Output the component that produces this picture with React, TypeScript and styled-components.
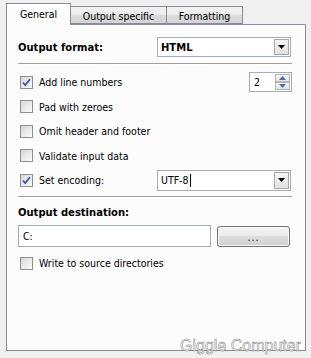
import React from "react";
import styled, { createGlobalStyle } from "styled-components";

const Global = createGlobalStyle`
  html, body { margin: 0; padding: 0; background: #f0f0f0; }
  body { font-family: "DejaVu Sans Condensed", "DejaVu Sans", sans-serif; font-size: 10px; color: #000; }
  * { box-sizing: border-box; }
`;

const Root = styled.div`
  position: relative;
  width: 311px;
  height: 358px;
  padding: 3px 0 0 6px;
  font-family: "DejaVu Sans Condensed", "DejaVu Sans", sans-serif;
  font-size: 10.5px;
`;

const TabStrip = styled.div`
  display: flex;
  align-items: flex-end;
  height: 21px;
  position: relative;
  z-index: 1;
`;

const Tab = styled.div<{ $active?: boolean; $w: number }>`
  height: ${(p) => (p.$active ? "22px" : "18px")};
  margin-bottom: ${(p) => (p.$active ? "-1px" : "0")};
  width: ${(p) => p.$w}px;
  border: 1px solid #898c95;
  border-bottom: ${(p) => (p.$active ? "none" : "1px solid #898c95")};
  margin-left: ${(p) => (p.$active ? "0" : "-1px")};
  background: ${(p) =>
    p.$active ? "#fcfcfc" : "linear-gradient(#f2f2f2, #ebebeb 50%, #dcdcdc 51%, #d4d4d4)"};
  display: flex;
  align-items: ${(p) => (p.$active ? "flex-start" : "center")};
  justify-content: center;
  padding-top: ${(p) => (p.$active ? "4px" : "1px")};
  color: #000;
`;

const Panel = styled.div`
  width: 300px;
  height: 327px;
  border: 1px solid #898c95;
  background: #fcfcfc;
  padding: 12px 13px 0 11px;
  display: flex;
  flex-direction: column;
`;

const FieldRow = styled.div<{ $h?: number }>`
  display: flex;
  align-items: center;
  height: ${(p) => p.$h ?? 20}px;
`;

const BoldLabel = styled.div<{ $w?: number }>`
  font-family: "DejaVu Sans", sans-serif;
  font-size: 10px;
  font-weight: bold;
  width: ${(p) => p.$w ?? 139}px;
  flex: none;
`;

const Separator = styled.div<{ $mt: number }>`
  margin-top: ${(p) => p.$mt}px;
  height: 2px;
  border-top: 1px solid #a0a0a0;
  border-bottom: 1px solid #ffffff;
`;

const Combo = styled.div<{ $w: number; $h: number }>`
  width: ${(p) => p.$w}px;
  height: ${(p) => p.$h}px;
  border: 1px solid #a5acb5;
  background: #fff;
  display: flex;
  align-items: center;
  padding: 1px;
`;

const ComboText = styled.div<{ $bold?: boolean }>`
  flex: 1;
  padding-left: 2px;
  ${(p) => (p.$bold ? `font-weight:bold; font-family:"DejaVu Sans",sans-serif; font-size:10px;` : "")}
  display: flex;
  align-items: center;
`;

const Caret = styled.span`
  display: inline-block;
  width: 1px;
  height: 13px;
  background: #000;
  margin-left: 1px;
`;

const DropBtn = styled.div`
  width: 15px;
  height: 100%;
  border: 1px solid #a7a7a7;
  background: linear-gradient(#f4f4f4, #e2e2e2);
  display: flex;
  align-items: center;
  justify-content: center;
`;

const CheckList = styled.div`
  margin-top: 7px;
  display: flex;
  flex-direction: column;
  gap: 4.5px;
`;

const CheckRow = styled.label<{ $mt?: number }>`
  display: flex;
  align-items: center;
  height: 20px;
  padding-left: 2px;
  margin-top: ${(p) => p.$mt ?? 0}px;
`;

const Box = styled.span`
  width: 13px;
  height: 13px;
  flex: none;
  border: 1px solid #8f8f8f;
  background: linear-gradient(135deg, #d6d6d6, #f4f4f4 80%, #fdfdfd);
  display: flex;
  align-items: center;
  justify-content: center;
  margin-right: 6px;
`;

const CheckText = styled.span<{ $w?: number }>`
  ${(p) => (p.$w ? `width:${p.$w}px; flex:none;` : "")}
`;

const Spacer = styled.div`
  flex: 1;
`;

const Spinner = styled.div`
  width: 43px;
  height: 20px;
  border: 1px solid #a5acb5;
  background: #fff;
  display: flex;
  align-items: stretch;
  padding: 1px;
`;

const SpinText = styled.div`
  flex: 1;
  padding-left: 3px;
  display: flex;
  align-items: center;
`;

const SpinBtns = styled.div`
  width: 15px;
  display: flex;
  flex-direction: column;
`;

const SpinBtn = styled.div`
  flex: 1;
  border: 1px solid #b5b5b5;
  background: linear-gradient(#f6f6f6, #e4e4e4);
  display: flex;
  align-items: center;
  justify-content: center;
`;

const SectionLabel = styled.div`
  margin-top: 7px;
  height: 14px;
  font-family: "DejaVu Sans", sans-serif;
  font-size: 10px;
  font-weight: bold;
  display: flex;
  align-items: center;
`;

const DestRow = styled.div`
  margin-top: 6px;
  display: flex;
  align-items: center;
  height: 22px;
`;

const TextInput = styled.div`
  width: 193px;
  height: 22px;
  border: 1px solid #a5acb5;
  background: #fff;
  padding-left: 4px;
  display: flex;
  align-items: center;
`;

const Button = styled.div`
  margin-left: 6px;
  width: 73px;
  height: 21px;
  border: 1px solid #707070;
  border-radius: 3px;
  background: linear-gradient(#f3f3f3, #ebebeb 45%, #dddddd 50%, #cfcfcf);
  box-shadow: inset 0 0 0 1px #fbfbfb;
  display: flex;
  align-items: center;
  justify-content: center;
  padding-top: 2px;
  letter-spacing: 1px;
`;

const Watermark = styled.div`
  position: absolute;
  right: 10px;
  bottom: 3px;
  font-family: "Liberation Sans", Arial, sans-serif;
  font-size: 16px;
  color: #ffffff;
  -webkit-text-stroke: 0.45px #707070;
  z-index: 2;
`;

const Tri = ({ color = "#000", up = false }: { color?: string; up?: boolean }) => (
  <svg width="7" height="4" viewBox="0 0 7 4">
    <path d={up ? "M0 4 L3.5 0 L7 4 Z" : "M0 0 L7 0 L3.5 4 Z"} fill={color} />
  </svg>
);

const Check = () => (
  <svg width="9" height="9" viewBox="0 0 9 9">
    <path d="M1 4.5 L3.2 7 L8 1.2" stroke="#3a56a8" strokeWidth="1.8" fill="none" />
  </svg>
);

const CheckBox = ({ checked }: { checked?: boolean }) => <Box>{checked ? <Check /> : null}</Box>;

export default function App() {
  return (
    <>
      <Global />
      <Root>
        <TabStrip>
          <Tab $active $w={65}>General</Tab>
          <Tab $w={97}>Output specific</Tab>
          <Tab $w={77}>Formatting</Tab>
        </TabStrip>
        <Panel>
          <FieldRow>
            <BoldLabel>Output format:</BoldLabel>
            <Combo $w={134} $h={20}>
              <ComboText $bold>HTML</ComboText>
              <DropBtn>
                <Tri />
              </DropBtn>
            </Combo>
          </FieldRow>
          <Separator $mt={6} />
          <CheckList>
            <CheckRow>
              <CheckBox checked />
              <CheckText>Add line numbers</CheckText>
              <Spacer />
              <Spinner>
                <SpinText>2</SpinText>
                <SpinBtns>
                  <SpinBtn>
                    <Tri color="#4d6bb5" up />
                  </SpinBtn>
                  <SpinBtn>
                    <Tri color="#4d6bb5" />
                  </SpinBtn>
                </SpinBtns>
              </Spinner>
            </CheckRow>
            <CheckRow>
              <CheckBox />
              <CheckText>Pad with zeroes</CheckText>
            </CheckRow>
            <CheckRow>
              <CheckBox />
              <CheckText>Omit header and footer</CheckText>
            </CheckRow>
            <CheckRow>
              <CheckBox />
              <CheckText>Validate input data</CheckText>
            </CheckRow>
            <CheckRow>
              <CheckBox checked />
              <CheckText $w={118}>Set encoding:</CheckText>
              <Combo $w={134} $h={21}>
                <ComboText>
                  UTF-8
                  <Caret />
                </ComboText>
                <DropBtn>
                  <Tri />
                </DropBtn>
              </Combo>
            </CheckRow>
          </CheckList>
          <Separator $mt={6} />
          <SectionLabel>Output destination:</SectionLabel>
          <DestRow>
            <TextInput>C:</TextInput>
            <Button>...</Button>
          </DestRow>
          <CheckRow $mt={6}>
            <CheckBox />
            <CheckText>Write to source directories</CheckText>
          </CheckRow>
        </Panel>
        <Watermark>Giggle Computer</Watermark>
      </Root>
    </>
  );
}
